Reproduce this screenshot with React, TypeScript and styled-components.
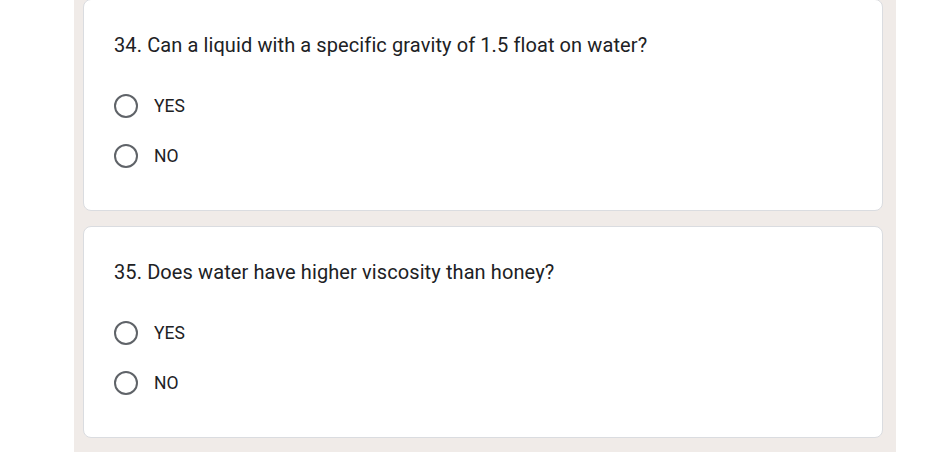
import React from "react";
import styled, { createGlobalStyle } from "styled-components";

const GlobalStyle = createGlobalStyle`
  body {
    margin: 0;
    background: #ffffff;
    font-family: Roboto, "Liberation Sans", Arial, sans-serif;
  }
`;

const Page = styled.div`
  width: 822px;
  height: 452px;
  box-sizing: border-box;
  margin-left: 74px;
  padding: 0 13px 0 9px;
  background: #f0ebe8;
  display: flex;
  flex-direction: column;
  gap: 15px;
  overflow: hidden;
`;

const Card = styled.div<{ $first?: boolean }>`
  box-sizing: border-box;
  height: 212px;
  margin-top: ${(p) => (p.$first ? "-1px" : "0")};
  background: #ffffff;
  border: 1px solid #dadce0;
  border-radius: 8px;
  padding: 32px 30px 0 30px;
`;

const Question = styled.div`
  font-size: 20px;
  line-height: 26px;
  color: #202124;
  letter-spacing: 0.1px;
`;

const Options = styled.div`
  margin-top: 23px;
  display: flex;
  flex-direction: column;
`;

const Option = styled.label`
  height: 50px;
  display: flex;
  align-items: center;
  gap: 16px;
  font-size: 17.5px;
  color: #202124;
`;

const Radio = styled.span`
  box-sizing: border-box;
  width: 24px;
  height: 24px;
  border: 2px solid #5f6368;
  border-radius: 50%;
  flex: none;
`;

const questions = [
  { n: 34, text: "Can a liquid with a specific gravity of 1.5 float on water?" },
  { n: 35, text: "Does water have higher viscosity than honey?" },
];

function App() {
  return (
    <>
      <GlobalStyle />
      <Page>
        {questions.map((q, i) => (
          <Card key={q.n} $first={i === 0}>
            <Question>
              {q.n}. {q.text}
            </Question>
            <Options>
              {["YES", "NO"].map((o) => (
                <Option key={o}>
                  <Radio />
                  {o}
                </Option>
              ))}
            </Options>
          </Card>
        ))}
      </Page>
    </>
  );
}

export default App;
